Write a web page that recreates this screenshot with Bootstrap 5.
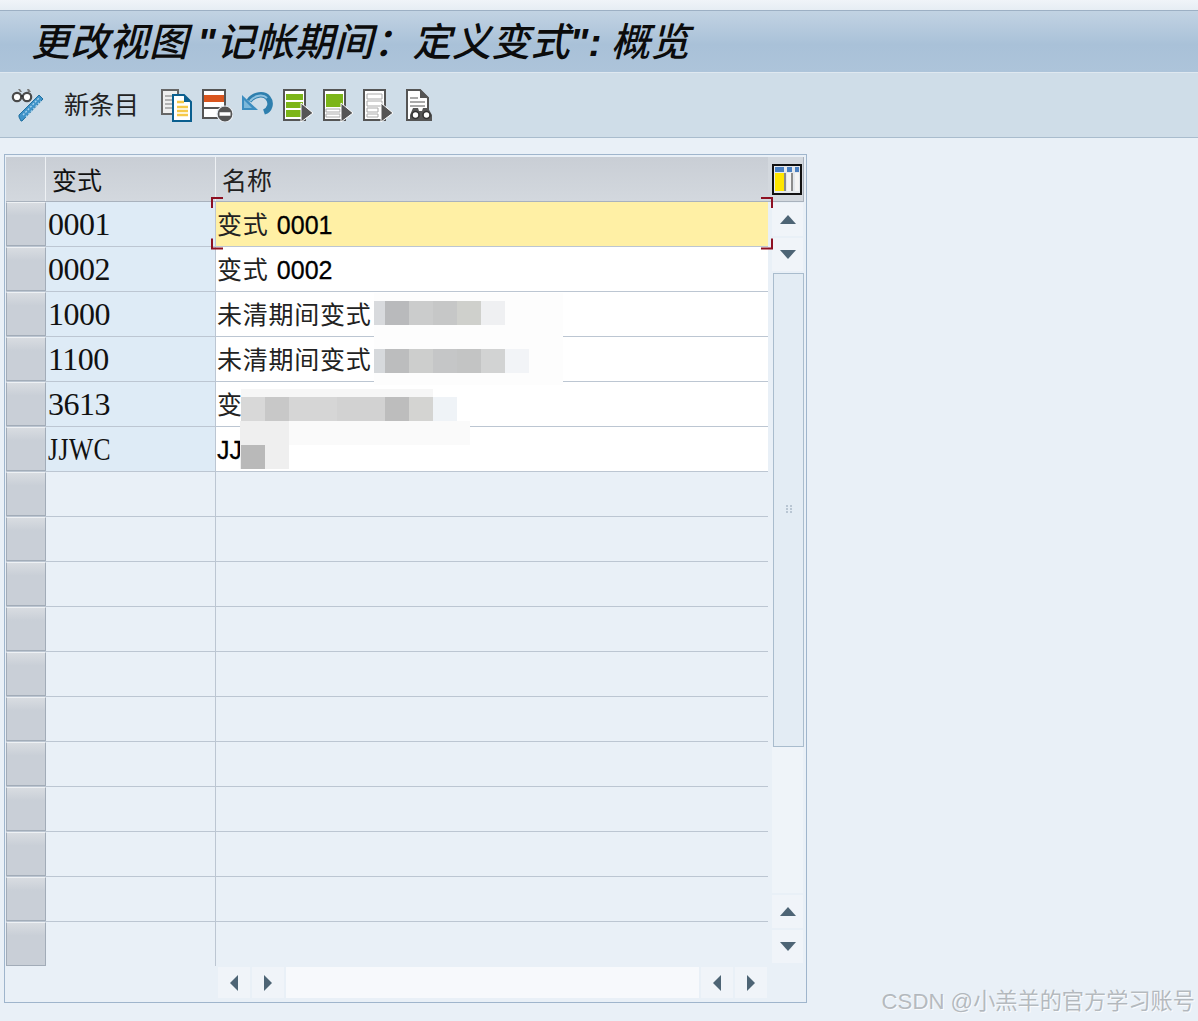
<!doctype html>
<html lang="zh"><head><meta charset="utf-8"><title>更改视图</title>
<link href="https://cdn.jsdelivr.net/npm/bootstrap@5.3.0/dist/css/bootstrap.min.css" rel="stylesheet">
<style>
html,body{height:100%}
body{background:#e9f0f7;width:1198px;height:1021px;overflow:hidden;position:relative;font-family:"Noto Sans CJK SC","Liberation Sans",sans-serif;color:#222}
.sap-strip{height:10px;background:linear-gradient(#f0f4f9,#e6edf4)}
.sap-title{height:63px;border-top:1px solid #9db0c4;border-bottom:1px solid #dfe8f0;background:linear-gradient(#c2d3e3,#a9c1d8 55%,#adc4da);padding-left:31px;font-size:39px;letter-spacing:.3px;font-style:italic;line-height:56px;color:#0c0c0c;white-space:nowrap;font-weight:500}
.sap-title b{font-family:"Liberation Sans",sans-serif;font-weight:700}
.sap-tools{height:65px;background:#cfdde8;border-bottom:1px solid #a9bccd;padding-left:10px}
.sap-tools svg{display:block;flex:none}
.sap-new{font-size:25px;margin:0 22px 4px 20px;color:#222;line-height:1}
.sap-icons{gap:8px}
.sap-frame{position:absolute;left:4px;top:154px;width:803px;height:849px;border:1px solid #9fb5cc;padding:2px 1px 0 1px}
.sap-grid{width:762px}
.sap-head{height:45px;background:linear-gradient(#c9ced5,#d3d8de);border-bottom:1px solid #a9b2bd;font-size:25px}
.sap-sel{width:40px;flex:none;background:linear-gradient(#d8dce1,#c9cfd7 30%);border:1px solid #a2acb8;border-top-color:#eef1f4}
.sap-head .sap-sel{background:linear-gradient(#c9ced5,#d3d8de);border:0;border-right:1px solid #eef1f4}
.sap-key{width:170px;flex:none;border-right:1px solid #bcc6d2;background:#deebf6;padding-left:2px;font-family:"Liberation Serif",serif;font-size:32px;letter-spacing:-.5px;line-height:44px;color:#111}
.sap-narrow{display:inline-block;transform:scaleX(.8);transform-origin:0 50%;letter-spacing:.6px}
.sap-name{flex:1;background:#fff;padding-left:1px;font-size:25px;letter-spacing:.75px;line-height:42px;white-space:nowrap;overflow:hidden}
.sap-name b{font-family:"Liberation Sans",sans-serif;font-weight:400;color:#000;letter-spacing:0;margin-left:2px;-webkit-text-stroke:.3px #000}
.sap-row{height:45px;border-bottom:1px solid #bcc6d2}
.sap-empty .sap-key,.sap-empty .sap-name{background:#e9f0f7}
.sap-row.sap-last{height:44px;border-bottom:0}
.sap-head .sap-key{background:none;font-family:"Noto Sans CJK SC",sans-serif;font-size:25px;letter-spacing:0;padding-left:6px;line-height:44px;border-right:1px solid #eef1f4}
.sap-head .sap-name{background:none;padding-left:6px;line-height:44px;letter-spacing:0}
.sap-hi .sap-name{background:#fff0a5}
.sap-vbar{width:32px;margin-left:4px}
.sap-chooser{height:45px;margin-left:-4px;background:#d3d8de;border-bottom:1px solid #a9b2bd;border-right:1px solid #a9b2bd;padding:7px 0 0 4px;width:36px}
.sap-btn{background:#f0f4f9;display:flex;align-items:center;justify-content:center;flex:none}
.sap-vbtn{width:31px;height:33px;margin-bottom:2px}
.sap-first{margin-top:1px}
.sap-hbtn{width:32px;height:31px;margin-right:2px}
.sap-thumb{height:474px;width:31px;margin:1px 0 0 1px;border:1px solid #a9bccd;background:#e3ecf4}
.sap-track{height:146px;background:#eff4f9;margin-bottom:2px;width:31px}
.sap-hbar{height:31px;margin:1px 0 0 212px}
.sap-htrack{width:413px;background:#f7f9fc;margin-right:2px}
.sap-over{position:absolute;left:0;top:0;pointer-events:none}
.sap-mark{position:absolute;right:3px;bottom:5px;font-size:22.200px;line-height:1.2;color:rgba(140,145,150,.6);text-shadow:1px 1px 0 rgba(255,255,255,.8);white-space:nowrap}
.sap-mark span{font-family:"Liberation Sans",sans-serif}
</style></head><body>
<div class="sap-strip"></div>
<div class="sap-title">更改视图 <b>"</b>记帐期间：定义变式<b>":</b> 概览</div>
<div class="sap-tools d-flex align-items-center">
<svg width="34" height="34" viewBox="0 0 34 34"><path d="M33 11l-21 22-1 0-2-4 0-2 20-20z" fill="#3f93c9" stroke="#1f6f9f"/><path d="M13 27l16-17M16 29l15-16" stroke="#a6d2ec" stroke-width="1.400" stroke-dasharray="2 1.500"/><path d="M10 4l-2-3h2l2 3zM18 4l-1-3h2l2 3z" fill="#777"/><circle cx="7" cy="9" r="4.200" fill="#fff" stroke="#4a4a4a" stroke-width="2.200"/><circle cx="17" cy="9" r="4.200" fill="#fff" stroke="#4a4a4a" stroke-width="2.200"/><path d="M11 8h2" stroke="#333" stroke-width="2"/></svg>
<span class="sap-new">新条目</span>
<div class="sap-icons d-flex">
<svg width="32" height="34" viewBox="0 0 32 34"><path d="M1 2h16v24H1z" fill="#efefef" stroke="#666" stroke-width="2"/><path d="M4 8h10M4 12h10M4 16h10M4 20h10" stroke="#b3b3b3" stroke-width="2"/><path d="M12 7h11l7 7v19H12z" fill="#fff" stroke="#0b5f8f" stroke-width="2"/><path d="M23 7l7 7h-7z" fill="#0b5f8f"/><path d="M16 14h7M16 19h11M16 23h11M16 27h11" stroke="#f6c948" stroke-width="2.600"/></svg>
<svg width="32" height="34" viewBox="0 0 32 34"><path d="M2 2h22v28H2z" fill="#fff" stroke="#555" stroke-width="2"/><path d="M3 7h20v7H3z" fill="#d9551e"/><path d="M3 20h20" stroke="#555" stroke-width="2"/><circle cx="24" cy="26" r="8" fill="#555" stroke="#e8eef4" stroke-width="1.200"/><path d="M18.500 26h11" stroke="#fff" stroke-width="3.500"/></svg>
<svg width="34" height="34" viewBox="0 0 34 34"><path d="M8 13c5-7 15-8 19-3 4 5 2 12-4 14" fill="none" stroke="#2e7fae" stroke-width="5.500"/><path d="M9 13c5-6 13-7 17-3" fill="none" stroke="#8fc2e0" stroke-width="2"/><path d="M1 7v15h16z" fill="#3c8dc0"/><path d="M3 12v8h8z" fill="#7db8da"/></svg>
<svg width="32" height="34" viewBox="0 0 32 34"><path d="M1 2h21v30H1z" fill="#fff" stroke="#555" stroke-width="2"/><path d="M3 6h17v6H3zM3 14h17v6H3zM3 22h17v7H3z" fill="#7cb518"/><path d="M18 15l12 10-12 9z" fill="#555" stroke="#fff"/></svg>
<svg width="32" height="34" viewBox="0 0 32 34"><path d="M1 2h21v30H1z" fill="#fff" stroke="#555" stroke-width="2"/><path d="M3 6h17v13H3z" fill="#7cb518"/><path d="M3 21h14v3H3zM3 26h14v3H3z" fill="#fff" stroke="#aaa"/><path d="M18 15l12 10-12 9z" fill="#555" stroke="#fff"/></svg>
<svg width="34" height="34" viewBox="0 0 34 34"><path d="M1 2h21v30H1z" fill="#fff" stroke="#555" stroke-width="2"/><path d="M4 6h15v5H4zM4 13h15v5H4zM4 20h11v4H4zM4 26h11v3H4z" fill="#fff" stroke="#aaa"/><path d="M18 15l12 10-12 9z" fill="#555" stroke="#fff"/></svg>
<svg width="30" height="34" viewBox="0 0 30 34"><path d="M2 2h13l8 8v22H2z" fill="#fff" stroke="#555" stroke-width="2"/><path d="M15 1l9 9h-9z" fill="#555"/><path d="M5 10h8M5 14h15M5 18h15" stroke="#aaa" stroke-width="2"/><path d="M8 20h5l1 3h3l1-3h5l4 7v6H5v-6z" fill="#555"/><circle cx="10.500" cy="27" r="3.500" fill="#fff" stroke="#333" stroke-width="1.600"/><circle cx="21.500" cy="27" r="3.500" fill="#fff" stroke="#333" stroke-width="1.600"/></svg>
</div></div>

<div class="sap-frame">
<div class="d-flex">
<div class="sap-grid">
<div class="sap-head d-flex"><div class="sap-sel"></div><div class="sap-key">变式</div><div class="sap-name">名称</div></div>
<div class="sap-row sap-hi d-flex"><div class="sap-sel"></div><div class="sap-key">0001</div><div class="sap-name">变式 <b>0001</b></div></div>
<div class="sap-row d-flex"><div class="sap-sel"></div><div class="sap-key">0002</div><div class="sap-name">变式 <b>0002</b></div></div>
<div class="sap-row d-flex"><div class="sap-sel"></div><div class="sap-key">1000</div><div class="sap-name">未清期间变式</div></div>
<div class="sap-row d-flex"><div class="sap-sel"></div><div class="sap-key">1100</div><div class="sap-name">未清期间变式</div></div>
<div class="sap-row d-flex"><div class="sap-sel"></div><div class="sap-key">3613</div><div class="sap-name">变</div></div>
<div class="sap-row d-flex"><div class="sap-sel"></div><div class="sap-key"><span class="sap-narrow">JJWC</span></div><div class="sap-name"><b class="ms-0">JJW</b></div></div>
<div class="sap-row sap-empty d-flex"><div class="sap-sel"></div><div class="sap-key"></div><div class="sap-name"></div></div>
<div class="sap-row sap-empty d-flex"><div class="sap-sel"></div><div class="sap-key"></div><div class="sap-name"></div></div>
<div class="sap-row sap-empty d-flex"><div class="sap-sel"></div><div class="sap-key"></div><div class="sap-name"></div></div>
<div class="sap-row sap-empty d-flex"><div class="sap-sel"></div><div class="sap-key"></div><div class="sap-name"></div></div>
<div class="sap-row sap-empty d-flex"><div class="sap-sel"></div><div class="sap-key"></div><div class="sap-name"></div></div>
<div class="sap-row sap-empty d-flex"><div class="sap-sel"></div><div class="sap-key"></div><div class="sap-name"></div></div>
<div class="sap-row sap-empty d-flex"><div class="sap-sel"></div><div class="sap-key"></div><div class="sap-name"></div></div>
<div class="sap-row sap-empty d-flex"><div class="sap-sel"></div><div class="sap-key"></div><div class="sap-name"></div></div>
<div class="sap-row sap-empty d-flex"><div class="sap-sel"></div><div class="sap-key"></div><div class="sap-name"></div></div>
<div class="sap-row sap-empty d-flex"><div class="sap-sel"></div><div class="sap-key"></div><div class="sap-name"></div></div>
<div class="sap-row sap-empty sap-last d-flex"><div class="sap-sel"></div><div class="sap-key"></div><div class="sap-name"></div></div>
</div>
<div class="sap-vbar">
<div class="sap-chooser"><svg width="30" height="31" viewBox="0 0 30 31"><rect x="0" y="0" width="30" height="31" fill="#111"/><rect x="2" y="2" width="26" height="27" fill="#e4e8ec"/><rect x="3" y="9" width="9" height="18" fill="#ffe600"/><rect x="15" y="9" width="4" height="18" fill="#f4f4f4"/><rect x="23" y="9" width="4" height="18" fill="#f4f4f4"/><rect x="12" y="9" width="2" height="18" fill="#8c8c8c"/><rect x="19" y="9" width="2" height="18" fill="#8c8c8c"/><rect x="3" y="3" width="9" height="5" fill="#4a7fc0"/><rect x="15" y="3" width="5" height="5" fill="#4a7fc0"/><rect x="23" y="3" width="4" height="5" fill="#4a7fc0"/></svg></div>
<div class="sap-btn sap-vbtn sap-first"><svg width="18" height="12" viewBox="0 0 18 12"><path d="M9 1l8 9H1z" fill="#4d6475"/></svg></div>
<div class="sap-btn sap-vbtn"><svg width="18" height="12" viewBox="0 0 18 12"><path d="M1 1h16l-8 9z" fill="#4d6475"/></svg></div>
<div class="sap-thumb d-flex align-items-center justify-content-center"><svg width="8" height="10" viewBox="0 0 8 10"><path d="M1 1h2M5 1h2M1 4h2M5 4h2M1 7h2M5 7h2" stroke="#8fa0b2"/></svg></div>
<div class="sap-track"></div>
<div class="sap-btn sap-vbtn"><svg width="18" height="12" viewBox="0 0 18 12"><path d="M9 1l8 9H1z" fill="#4d6475"/></svg></div>
<div class="sap-btn sap-vbtn"><svg width="18" height="12" viewBox="0 0 18 12"><path d="M1 1h16l-8 9z" fill="#4d6475"/></svg></div>
</div>
</div>
<div class="sap-hbar d-flex">
<div class="sap-btn sap-hbtn"><svg width="12" height="18" viewBox="0 0 12 18"><path d="M10 1v16L2 9z" fill="#4d6475"/></svg></div>
<div class="sap-btn sap-hbtn"><svg width="12" height="18" viewBox="0 0 12 18"><path d="M2 1v16l8-8z" fill="#4d6475"/></svg></div>
<div class="sap-htrack"></div>
<div class="sap-btn sap-hbtn"><svg width="12" height="18" viewBox="0 0 12 18"><path d="M10 1v16L2 9z" fill="#4d6475"/></svg></div>
<div class="sap-btn sap-hbtn"><svg width="12" height="18" viewBox="0 0 12 18"><path d="M2 1v16l8-8z" fill="#4d6475"/></svg></div>
</div>
</div>

<svg class="sap-over" width="1198" height="1021" viewBox="0 0 1198 1021">
<path d="M223 198h-11v10M223 248.500h-11v-10M761 198h11v10M761 248.500h11v-10" fill="none" stroke="#8e1022" stroke-width="2"/>
<rect x="374" y="293" width="189" height="92" fill="#fdfdfd"/>
<rect x="374" y="301" width="11" height="24" fill="#d8dadd"/><rect x="385" y="301" width="24" height="24" fill="#b9babc"/><rect x="409" y="301" width="24" height="24" fill="#cbcccc"/><rect x="433" y="301" width="24" height="24" fill="#c6c7c7"/><rect x="457" y="301" width="24" height="24" fill="#cfd0cc"/><rect x="481" y="301" width="24" height="24" fill="#eff0f2"/>
<rect x="374" y="349" width="11" height="24" fill="#d6d9dc"/><rect x="385" y="349" width="24" height="24" fill="#bcbdbe"/><rect x="409" y="349" width="24" height="24" fill="#cdcecd"/><rect x="433" y="349" width="24" height="24" fill="#c5c6c7"/><rect x="457" y="349" width="24" height="24" fill="#c3c4c4"/><rect x="481" y="349" width="24" height="24" fill="#d2d3d3"/><rect x="505" y="349" width="24" height="24" fill="#f2f4f7"/>
<rect x="241" y="389" width="192" height="8" fill="#f6f6f6"/>
<rect x="241" y="397" width="24" height="24" fill="#d8d8d8"/><rect x="265" y="397" width="24" height="24" fill="#c8c8c8"/><rect x="289" y="397" width="48" height="24" fill="#d6d6d6"/><rect x="337" y="397" width="48" height="24" fill="#d2d2d2"/><rect x="385" y="397" width="24" height="24" fill="#bdbdbd"/><rect x="409" y="397" width="24" height="24" fill="#d4d4d2"/><rect x="433" y="397" width="24" height="24" fill="#eff3f7"/>
<rect x="240" y="421" width="230" height="24" fill="#fafafa"/><rect x="240" y="421" width="49" height="48" fill="#efefef"/><rect x="241" y="445" width="24" height="24" fill="#b9b9b9"/>
</svg>
<div class="sap-mark"><span>CSDN @</span>小羔羊的官方学习账号</div>
<script src="https://cdn.jsdelivr.net/npm/bootstrap@5.3.0/dist/js/bootstrap.bundle.min.js"></script>
</body></html>
